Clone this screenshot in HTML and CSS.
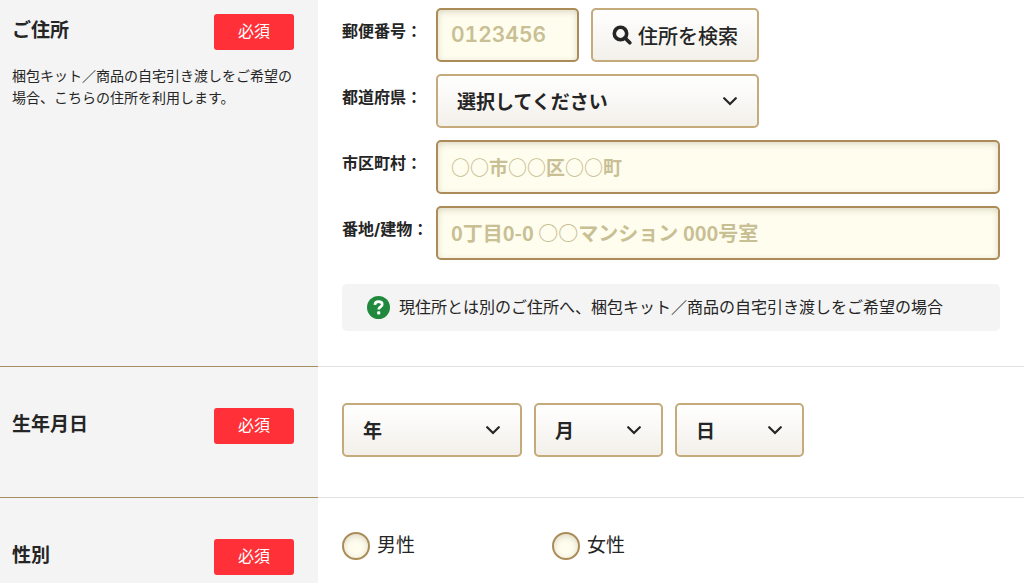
FILE: index.html
```html
<!DOCTYPE html>
<html lang="ja">
<head>
<meta charset="utf-8">
<meta name="viewport" content="width=device-width, initial-scale=1">
<title>お客様情報</title>
<link rel="stylesheet" href="styles.css">
</head>
<body>
<form class="form">
  <section class="row row-first">
    <div class="head">
      <div class="head-line">
        <h2 class="title">ご住所</h2>
        <span class="badge">必須</span>
      </div>
      <p class="note">梱包キット／商品の自宅引き渡しをご希望の場合、こちらの住所を利用します。</p>
    </div>
    <div class="body">
      <div class="fields">
        <label class="label" for="zip">郵便番号：</label>
        <div class="controls">
          <input class="input input-zip" id="zip" type="text" placeholder="0123456">
          <button class="search" type="button">
            <svg class="search-icon" viewBox="0 0 20 20" aria-hidden="true"><circle cx="8.5" cy="8.500" r="6.2"/><path d="M13 13l4.8 4.8"/></svg>
            住所を検索
          </button>
        </div>
        <label class="label" for="pref">都道府県：</label>
        <div class="select select-pref">
          <select class="select-box" id="pref"><option>選択してください</option></select>
          <svg class="chevron" viewBox="0 0 14 9" aria-hidden="true"><path d="M1.2 1.2L7 7l5.800-5.800"/></svg>
        </div>
        <label class="label" for="city">市区町村：</label>
        <input class="input" id="city" type="text" placeholder="○○市○○区○○町">
        <label class="label" for="street">番地/建物：</label>
        <input class="input input-street" id="street" type="text" placeholder="0丁目0-0 ○○マンション 000号室">
      </div>
      <div class="hint">
        <svg class="hint-icon" viewBox="0 0 24 24" aria-hidden="true"><circle cx="12" cy="12" r="12"/><path d="M8.200 9.200C8.400 7 10 5.900 12.100 5.900c2.200 0 3.800 1.200 3.800 3 0 2.500-3.700 2.500-3.700 5.200"/><rect x="10.600" y="16" width="3.200" height="3.200" rx="1"/></svg>
        <span class="hint-text">現住所とは別のご住所へ、梱包キット／商品の自宅引き渡しをご希望の場合</span>
      </div>
    </div>
  </section>

  <section class="row">
    <div class="head">
      <div class="head-line">
        <h2 class="title">生年月日</h2>
        <span class="badge">必須</span>
      </div>
    </div>
    <div class="body controls">
      <div class="select select-year">
        <select class="select-box" aria-label="年"><option>年</option></select>
        <svg class="chevron" viewBox="0 0 14 9" aria-hidden="true"><path d="M1.2 1.2L7 7l5.800-5.800"/></svg>
      </div>
      <div class="select select-short">
        <select class="select-box" aria-label="月"><option>月</option></select>
        <svg class="chevron" viewBox="0 0 14 9" aria-hidden="true"><path d="M1.2 1.2L7 7l5.800-5.800"/></svg>
      </div>
      <div class="select select-short">
        <select class="select-box" aria-label="日"><option>日</option></select>
        <svg class="chevron" viewBox="0 0 14 9" aria-hidden="true"><path d="M1.2 1.2L7 7l5.800-5.800"/></svg>
      </div>
    </div>
  </section>

  <section class="row row-last">
    <div class="head">
      <div class="head-line">
        <h2 class="title">性別</h2>
        <span class="badge">必須</span>
      </div>
    </div>
    <div class="body radios">
      <label class="radio"><input class="radio-dot" type="radio" name="gender">男性</label>
      <label class="radio"><input class="radio-dot" type="radio" name="gender">女性</label>
    </div>
  </section>
</form>
</body>
</html>
```
FILE: styles.css
```css
* {
  box-sizing: border-box;
}

body {
  margin: 0;
  background: #fff;
  color: #252525;
  font-family: Inter, "Noto Sans CJK JP", sans-serif;
  font-size: 16px;
}

.row {
  display: grid;
  grid-template-columns: 318px 1fr;
}

.head {
  padding: 41px 24px 52px 12px;
  background: #f4f4f4;
  border-bottom: 1px solid #a58e62;
}

.body {
  padding: 36px 24px 40px;
  border-bottom: 1px solid #e0e0e0;
}

.row-first .head {
  padding-top: 14px;
}

.row-first .body {
  padding-top: 8px;
  padding-bottom: 35px;
}

.row-last .head {
  padding-bottom: 8px;
  border-bottom: 0;
}

.row-last .body {
  padding-top: 34px;
  padding-bottom: 8px;
  border-bottom: 0;
}

.head-line {
  display: flex;
  justify-content: space-between;
  align-items: flex-start;
}

.title {
  margin: 0;
  font-size: 19px;
  line-height: 34px;
  font-weight: 700;
}

.badge {
  width: 80px;
  height: 36px;
  border-radius: 3px;
  background: #ff3038;
  color: #fff;
  line-height: 34px;
  text-align: center;
}

.note {
  margin: 15px 0 0;
  font-size: 14px;
  line-height: 22px;
}

.fields {
  display: grid;
  grid-template-columns: 94px 1fr;
  row-gap: 12px;
}

.label {
  font-weight: 700;
  line-height: 46px;
  white-space: nowrap;
}

.controls {
  display: flex;
  align-items: flex-start;
  gap: 12px;
}

.input {
  width: 100%;
  height: 54px;
  padding: 0 13px 2px;
  border: 2px solid #ab8c58;
  border-radius: 5px;
  background: #fffdee;
  box-shadow: inset 0 2px 6px rgba(80, 70, 40, 0.2);
  color: #252525;
  font: 700 19px "Noto Sans CJK JP", sans-serif;
}

.input::placeholder {
  color: #c9bf95;
  opacity: 1;
}

.input-zip {
  width: 143px;
  font: 600 21px Inter, sans-serif;
  font-variant-numeric: tabular-nums;
}

.input-street {
  font-size: 20px;
}

.search,
.select-box {
  height: 54px;
  border: 2px solid #c5aa7c;
  border-radius: 5px;
  background: linear-gradient(#fff, #f3f0ea);
  color: #252525;
  font-family: Inter, "Noto Sans CJK JP", sans-serif;
}

.search {
  display: flex;
  align-items: center;
  justify-content: center;
  gap: 6px;
  width: 168px;
  padding: 0;
  font-size: 20px;
  font-weight: 500;
}

.search-icon {
  width: 20px;
  height: 20px;
  fill: none;
  stroke: #252525;
  stroke-width: 3.6;
  stroke-linecap: round;
}

.select {
  display: grid;
  align-items: center;
}

.select-box,
.chevron {
  grid-area: 1 / 1;
}

.select-box {
  width: 100%;
  padding: 2px 19px 0;
  appearance: none;
  font-size: 19px;
  font-weight: 700;
}

.chevron {
  justify-self: end;
  width: 14px;
  height: 9px;
  margin-right: 22px;
  fill: none;
  stroke: #252525;
  stroke-width: 2.2;
  stroke-linecap: round;
  pointer-events: none;
}

.select-pref {
  width: 323px;
}

.select-year {
  width: 180px;
}

.select-short {
  width: 129px;
}

.hint {
  display: flex;
  align-items: center;
  gap: 9px;
  min-height: 47px;
  margin-top: 24px;
  padding: 0 25px;
  border-radius: 5px;
  background: #f4f4f4;
}

.hint-icon {
  flex: none;
  width: 23px;
  height: 23px;
  fill: #fff;
}

.hint-text {
  padding-bottom: 4px;
}

.hint-icon circle {
  fill: #21893d;
}

.hint-icon path {
  fill: none;
  stroke: #fff;
  stroke-width: 2.8;
}

.radios {
  display: flex;
  align-items: flex-start;
}

.radio {
  display: flex;
  align-items: center;
  gap: 7px;
  width: 210px;
  font-size: 19px;
  line-height: 28px;
}

.radio-dot {
  width: 28px;
  height: 28px;
  margin: 0;
  appearance: none;
  border: 2px solid #ab8c58;
  border-radius: 50%;
  background: #fffdee;
  box-shadow: inset 0 2px 6px rgba(80, 70, 40, 0.2);
}

.radio-dot:checked {
  background: radial-gradient(#ab8c58 40%, #fffdee 45%);
}
```
